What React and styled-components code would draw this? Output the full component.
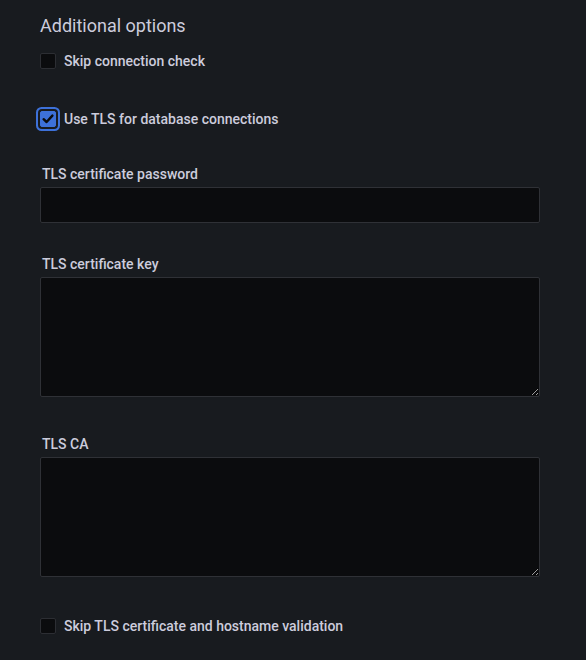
import React from "react";
import styled, { createGlobalStyle } from "styled-components";

const GlobalStyle = createGlobalStyle`
  body {
    margin: 0;
    background: #181b1f;
    font-family: Roboto, "Noto Sans", sans-serif;
    color: #ccccdc;
  }
`;

const Page = styled.div`
  padding: 15px 46px 0 40px;
  min-height: 660px;
  box-sizing: border-box;
`;

const Heading = styled.h3`
  margin: 0 0 16px;
  font-size: 18px;
  font-weight: 400;
  line-height: 22px;
  color: #ccccdc;
`;

const CheckRow = styled.label`
  display: flex;
  align-items: center;
  gap: 8px;
  height: 16px;
  margin-bottom: ${(p) => p.$gap || 0}px;
  font-size: 14px;
  font-weight: 500;
  color: #ccccdc;
  cursor: pointer;
`;

const Box = styled.span`
  width: 16px;
  height: 16px;
  box-sizing: border-box;
  border-radius: 2px;
  border: 1px solid ${(p) => (p.$checked ? "#3d71d9" : "#2c2e33")};
  background: ${(p) => (p.$checked ? "#3d71d9" : "#0b0c0e")};
  display: flex;
  align-items: center;
  justify-content: center;
  flex-shrink: 0;
  box-shadow: ${(p) =>
    p.$focused ? "0 0 0 2px #181b1f, 0 0 0 4px #3d71d9" : "none"};
`;

const Field = styled.div`
  margin-bottom: ${(p) => p.$gap || 0}px;
`;

const Label = styled.div`
  font-size: 14px;
  font-weight: 500;
  line-height: 18px;
  margin-bottom: 4px;
  padding-left: 2px;
  color: #ccccdc;
`;

const Input = styled.input`
  display: block;
  width: 100%;
  height: 36px;
  box-sizing: border-box;
  background: #0b0c0e;
  border: 1px solid #2f3136;
  border-radius: 2px;
  color: #ccccdc;
  padding: 0 8px;
  outline: none;
  font: inherit;
`;

const TextArea = styled.textarea`
  display: block;
  width: 100%;
  height: 120px;
  box-sizing: border-box;
  background: #0b0c0e;
  border: 1px solid #2f3136;
  border-radius: 2px;
  color: #ccccdc;
  padding: 6px 8px;
  outline: none;
  resize: vertical;
  font: inherit;
  color-scheme: dark;
`;

const Check = ({ checked, focused, children, gap }) => (
  <CheckRow $gap={gap}>
    <Box $checked={checked} $focused={focused}>
      {checked && (
        <svg width="14" height="14" viewBox="0 0 14 14">
          <path
            d="M2.6 7.2 L5.6 10 L11.4 3.6"
            fill="none"
            stroke="#0b0c0e"
            strokeWidth="2.4"
            strokeLinecap="round"
            strokeLinejoin="round"
          />
        </svg>
      )}
    </Box>
    {children}
  </CheckRow>
);

export default function App() {
  return (
    <>
      <GlobalStyle />
      <Page>
        <Heading>Additional options</Heading>
        <Check gap={42}>Skip connection check</Check>
        <Check checked focused gap={38}>
          Use TLS for database connections
        </Check>
        <Field $gap={32}>
          <Label>TLS certificate password</Label>
          <Input type="password" />
        </Field>
        <Field $gap={38}>
          <Label>TLS certificate key</Label>
          <TextArea />
        </Field>
        <Field $gap={41}>
          <Label>TLS CA</Label>
          <TextArea />
        </Field>
        <Check>Skip TLS certificate and hostname validation</Check>
      </Page>
    </>
  );
}
